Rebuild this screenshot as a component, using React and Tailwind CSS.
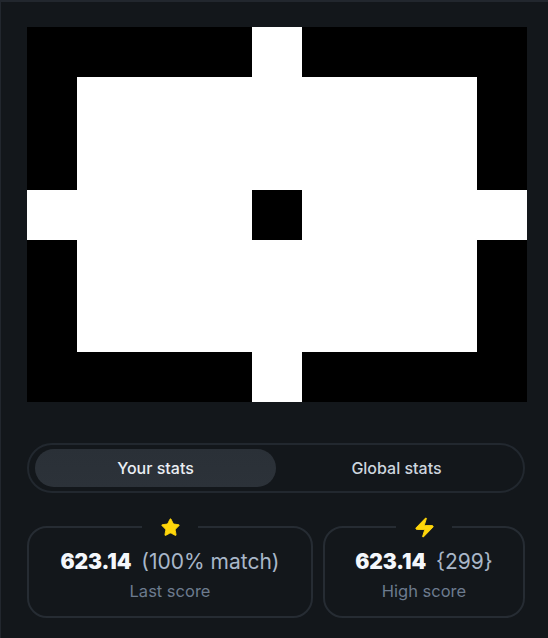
import React, { useState } from 'react';
import { Star, Zap } from 'lucide-react';

// Pattern drawn on the 500x375 canvas (20 x 15 cells of 25px)
const WHITE_RECTS = [
  { x: 225, y: 0, w: 50, h: 50 },
  { x: 50, y: 50, w: 400, h: 275 },
  { x: 0, y: 163, w: 50, h: 50 },
  { x: 450, y: 163, w: 50, h: 50 },
  { x: 225, y: 325, w: 50, h: 50 },
];

function PatternCanvas() {
  return (
    <svg width="500" height="375" viewBox="0 0 500 375" className="block shrink-0">
      <rect x="0" y="0" width="500" height="375" fill="#000" />
      {WHITE_RECTS.map((r, i) => (
        <rect key={i} x={r.x} y={r.y} width={r.w} height={r.h} fill="#fff" />
      ))}
      <rect x="225" y="163" width="50" height="50" fill="#000" />
    </svg>
  );
}

function StatCard({ icon, value, extra, label, className }) {
  return (
    <div className={`relative h-[92px] rounded-[20px] border-2 border-[#262c33] flex flex-col items-center justify-center ${className}`}>
      <div className="absolute -top-[13px] left-1/2 -translate-x-1/2 w-[56px] h-[24px] bg-[#13171b] flex items-center justify-center">
        {icon}
      </div>
      <div className="flex items-baseline gap-[10px] mt-[6px]">
        <span className="text-[21px] font-black text-[#f4f7fb] tracking-[-0.1px]">{value}</span>
        <span className="text-[21px] text-[#a9b7c9]">{extra}</span>
      </div>
      <span className="text-[16.5px] text-[#6c7b8e] mt-[1px]">{label}</span>
    </div>
  );
}

export default function App() {
  const [tab, setTab] = useState('yours');

  return (
    <div
      className="w-[548px] h-[638px] bg-[#13171b] border-t-2 border-l border-[#22272e] pt-[25px] pl-[26px] overflow-hidden"
      style={{ fontFamily: 'Inter, "Noto Sans", sans-serif' }}
    >
      <PatternCanvas />

      <div className="w-[498px] mt-[41px] h-[50px] rounded-full border-2 border-[#22282f] grid grid-cols-2 px-[6px] py-[4px]">
        <button
          onClick={() => setTab('yours')}
          className={`rounded-full text-[16px] font-medium ${tab === 'yours' ? 'bg-gradient-to-b from-[#2a3037] to-[#2c3239] text-[#eaeef3]' : 'text-[#cdd5de]'}`}
        >
          Your stats
        </button>
        <button
          onClick={() => setTab('global')}
          className={`rounded-full text-[16px] font-medium ${tab === 'global' ? 'bg-gradient-to-b from-[#2a3037] to-[#2c3239] text-[#eaeef3]' : 'text-[#cdd5de]'}`}
        >
          Global stats
        </button>
      </div>

      <div className="w-[498px] mt-[33px] flex gap-[10px]">
        <StatCard
          className="w-[286px]"
          icon={<Star size={21} fill="#ffd60a" stroke="#ffd60a" strokeWidth={1} />}
          value="623.14"
          extra="(100% match)"
          label="Last score"
        />
        <StatCard
          className="w-[202px]"
          icon={<Zap size={23} fill="#ffd60a" stroke="#ffd60a" strokeWidth={1} />}
          value="623.14"
          extra="{299}"
          label="High score"
        />
      </div>
    </div>
  );
}
